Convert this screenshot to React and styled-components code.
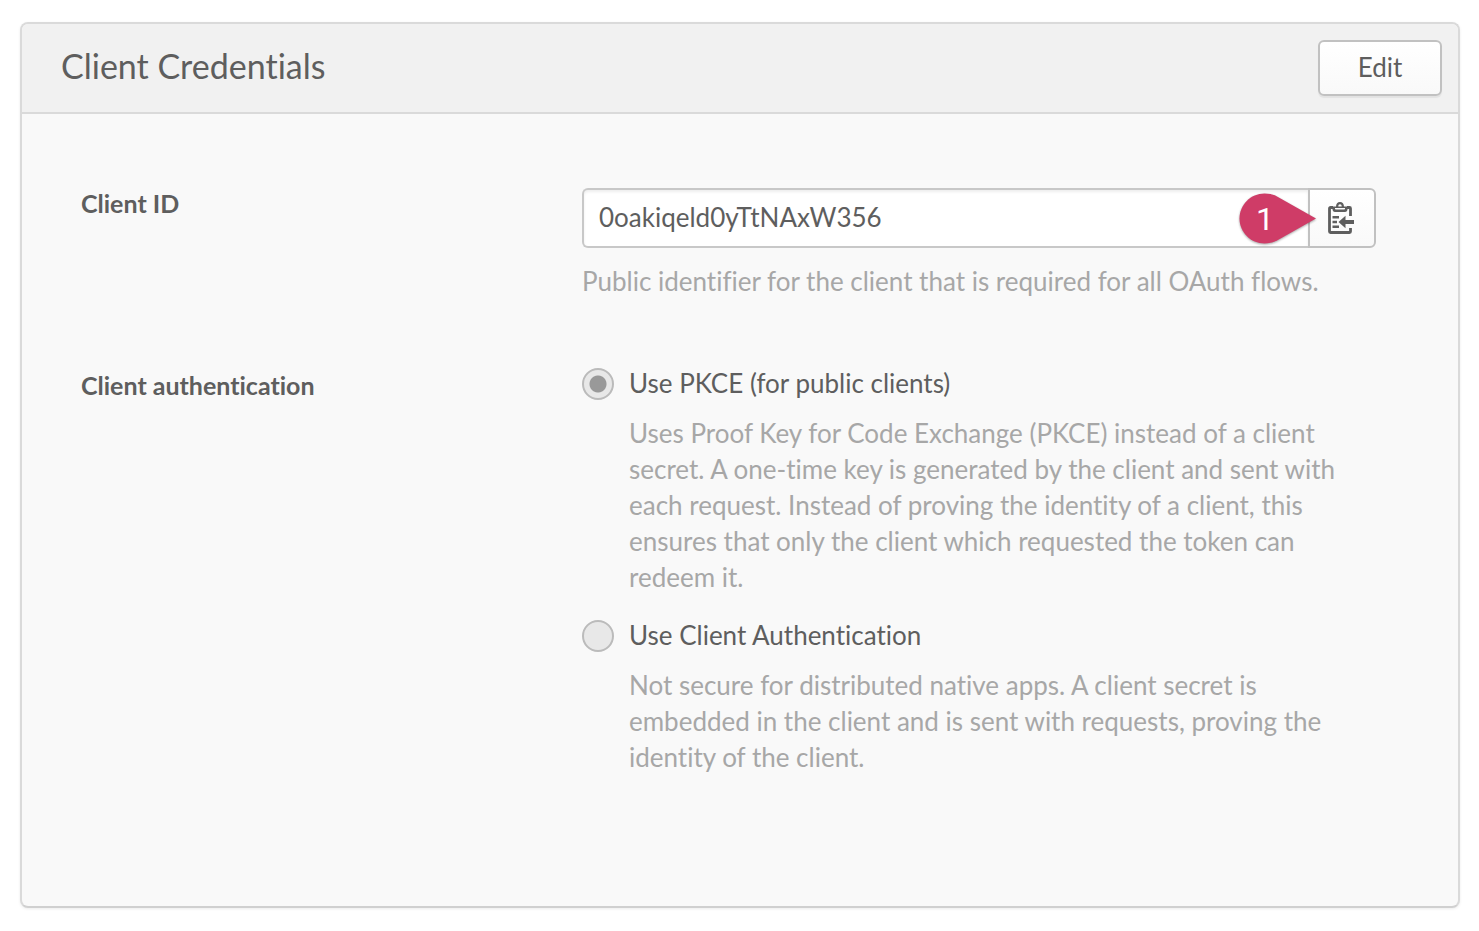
import React from "react";
import styled, { createGlobalStyle } from "styled-components";

const GlobalStyle = createGlobalStyle`
  *, *::before, *::after { box-sizing: border-box; }
  body {
    margin: 0;
    background: #ffffff;
    color: #5e5e5e;
    font-family: Lato, "Noto Sans", sans-serif;
    font-size: 26px;
    line-height: 36px;
    font-variant-ligatures: none;
  }
`;

const Page = styled.main`
  padding: 22px 19px 23px 20px;
`;

const Panel = styled.section`
  border: 2px solid #dadada;
  border-bottom-color: #d0d0d0;
  border-radius: 8px;
  background: #f9f9f9;
  box-shadow: 0 1px 3px rgba(0, 0, 0, 0.08);
`;

const PanelHeader = styled.header`
  display: flex;
  align-items: center;
  justify-content: space-between;
  height: 90px;
  padding: 0 16px 0 39px;
  border-bottom: 2px solid #dadada;
  border-radius: 6px 6px 0 0;
  background: #f1f1f1;
`;

const Title = styled.h1`
  margin: 0;
  padding-bottom: 4px;
  font-size: 34px;
  line-height: 40px;
  font-weight: 400;
`;

const EditButton = styled.button`
  width: 124px;
  height: 56px;
  padding: 0 0 2px;
  border: 2px solid #c1c1c1;
  border-radius: 6px;
  background: linear-gradient(#ffffff, #f9f9f9);
  box-shadow: 0 2px 1px rgba(0, 0, 0, 0.06);
  color: inherit;
  font: inherit;
`;

const PanelBody = styled.div`
  display: flex;
  flex-direction: column;
  gap: 66px;
  padding: 71px 82px 131px 59px;
`;

const Field = styled.div`
  display: grid;
  grid-template-columns: 501px minmax(0, 1fr);
`;

const FieldLabel = styled.label`
  font-size: 25px;
  font-weight: 700;
`;

const GroupLabel = styled(FieldLabel).attrs({ as: "div" })`
  padding-top: 2px;
`;

const FieldContent = styled.div`
  display: flex;
  flex-direction: column;
  gap: 15px;
  padding-top: 3px;
`;

const InputGroup = styled.div`
  position: relative;
  display: flex;
  height: 60px;
`;

const TextInput = styled.input`
  flex: 1;
  min-width: 0;
  padding: 0 88px 2px 15px;
  border: 2px solid #c8c8c8;
  border-right: 0;
  border-radius: 6px 0 0 6px;
  background: #ffffff;
  box-shadow: inset 0 2px 3px rgba(0, 0, 0, 0.07);
  color: inherit;
  font: inherit;
  outline: none;
`;

const CopyButton = styled.button`
  display: flex;
  align-items: center;
  justify-content: center;
  width: 68px;
  padding: 0 2px 0 0;
  border: 2px solid #c1c1c1;
  border-radius: 0 6px 6px 0;
  background: linear-gradient(#ffffff, #f9f9f9);
  color: inherit;
`;

const Callout = styled.div`
  position: absolute;
  top: 5px;
  right: 59px;
  width: 78px;
  height: 53px;
  pointer-events: none;

  svg {
    display: block;
    filter: drop-shadow(0 1px 1px rgba(0, 0, 0, 0.35));
  }
`;

const CalloutNumber = styled.span`
  position: absolute;
  inset: 0 26px 0 0;
  color: #ffffff;
  font-family: Roboto, sans-serif;
  font-size: 32px;
  line-height: 52px;
  text-align: center;
`;

const HelpText = styled.p`
  margin: 0;
  color: #a7a7a7;
`;

const Options = styled.div`
  display: flex;
  flex-direction: column;
  gap: 22px;
`;

const Option = styled.div`
  display: grid;
  grid-template-columns: 32px minmax(0, 1fr);
  column-gap: 15px;
  row-gap: 14px;
  align-items: center;

  ${HelpText} {
    grid-column: 2;
  }
`;

const Radio = styled.input`
  appearance: none;
  width: 32px;
  height: 32px;
  margin: 2px 0 0;
  border: 2px solid #bbbbbb;
  border-radius: 50%;
  background: #e8e8e8;

  &:checked {
    background: radial-gradient(circle, #999999 0 8px, #e8e8e8 9px);
  }
`;

function ClipboardIcon() {
  return (
    <svg width="26" height="32" viewBox="0 0 26 32" fill="none" aria-hidden="true">
      <path
        d="M5 5.5H2.5a1 1 0 0 0-1 1v23a1 1 0 0 0 1 1h19a1 1 0 0 0 1-1V26M22.500 14V6.500a1 1 0 0 0-1-1H19"
        stroke="currentColor"
        strokeWidth="2.800"
      />
      <path
        d="M4.500 4.500H8C8 1.800 9.500 0 12 0s4 1.800 4 4.500h3.500v2.700c0 1.500-1 2.800-2.500 2.800H7C5.500 10 4.500 8.700 4.500 7.200ZM10.300 4.500h3.400c0-1.500-.6-2.300-1.700-2.300s-1.700.8-1.700 2.300ZM7 6v.8c0 .5.3.8.8.8h8.400c.5 0 .8-.3.8-.8V6Z"
        fill="currentColor"
        fillRule="evenodd"
      />
      <path d="M4.500 15.300H11M4.500 20H9M4.500 24.800H11" stroke="currentColor" strokeWidth="2.400" />
      <path d="M10.500 20 17.500 13.800V18H26v4h-8.500v4.200Z" fill="currentColor" />
    </svg>
  );
}

function StepCallout({ number }) {
  return (
    <Callout>
      <svg width="78" height="53" viewBox="0 0 78 53" aria-hidden="true">
        <path
          d="M25.500 0.500C11.500 0.500 0.500 12 0.500 25.500s11 25 25 25c5 0 9-1 13-3.200L77 25.500 38.500 3.700C34.500 1.500 30.500 0.500 25.500 0.500Z"
          fill="#cf3c67"
        />
      </svg>
      <CalloutNumber>{number}</CalloutNumber>
    </Callout>
  );
}

export default function App() {
  return (
    <>
      <GlobalStyle />
      <Page>
        <Panel>
          <PanelHeader>
            <Title>Client Credentials</Title>
            <EditButton type="button">Edit</EditButton>
          </PanelHeader>
          <PanelBody>
            <Field>
              <FieldLabel htmlFor="client-id">Client ID</FieldLabel>
              <FieldContent>
                <InputGroup>
                  <TextInput
                    id="client-id"
                    type="text"
                    readOnly
                    value="0oakiqeld0yTtNAxW356"
                    aria-describedby="client-id-help"
                  />
                  <CopyButton type="button" aria-label="Copy to clipboard">
                    <ClipboardIcon />
                  </CopyButton>
                  <StepCallout number={1} />
                </InputGroup>
                <HelpText id="client-id-help">
                  Public identifier for the client that is required for all OAuth flows.
                </HelpText>
              </FieldContent>
            </Field>
            <Field role="radiogroup" aria-labelledby="client-auth">
              <GroupLabel id="client-auth">Client authentication</GroupLabel>
              <Options>
                <Option>
                  <Radio id="pkce" type="radio" name="auth" defaultChecked disabled />
                  <label htmlFor="pkce">Use PKCE (for public clients)</label>
                  <HelpText>
                    Uses Proof Key for Code Exchange (PKCE) instead of a client secret. A
                    one-time key is generated by the client and sent with each request.
                    Instead of proving the identity of a client, this ensures that only the
                    client which requested the token can redeem it.
                  </HelpText>
                </Option>
                <Option>
                  <Radio id="secret" type="radio" name="auth" disabled />
                  <label htmlFor="secret">Use Client Authentication</label>
                  <HelpText>
                    Not secure for distributed native apps. A client secret is embedded in
                    the client and is sent with requests, proving the identity of the
                    client.
                  </HelpText>
                </Option>
              </Options>
            </Field>
          </PanelBody>
        </Panel>
      </Page>
    </>
  );
}
